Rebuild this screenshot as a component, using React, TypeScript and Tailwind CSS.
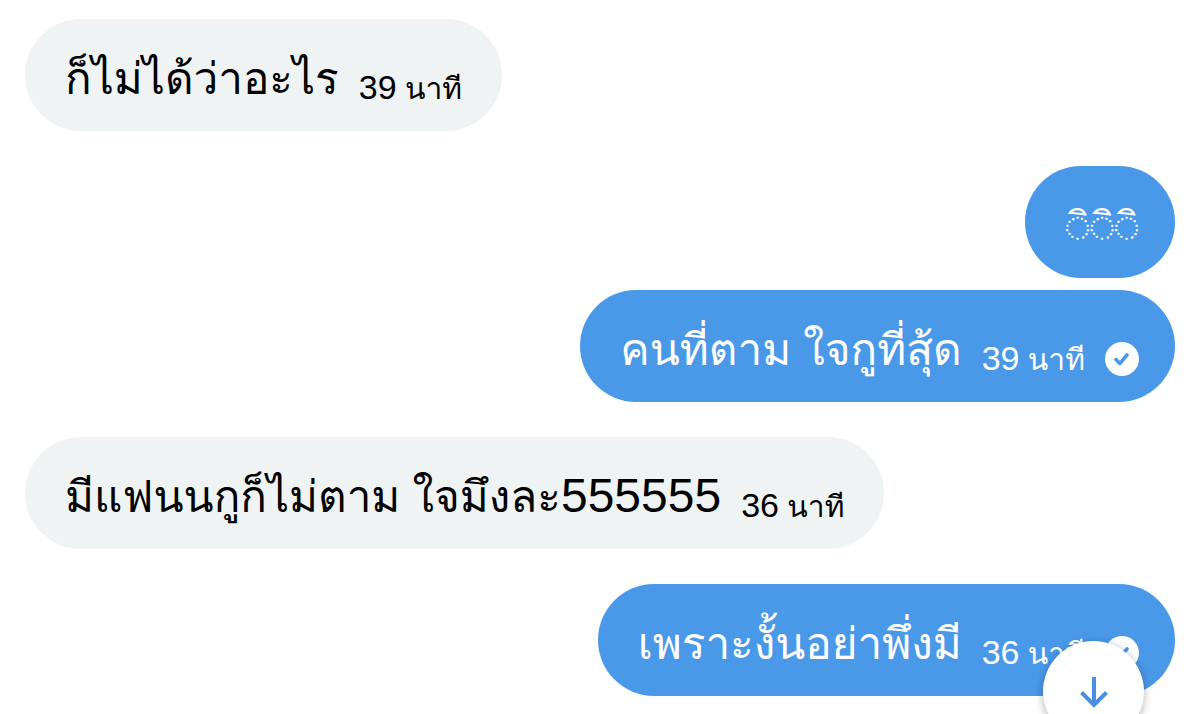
import { clsx } from 'clsx'

type Author = 'them' | 'me'

interface Message {
  id: number
  author: Author
  text: string
  digits?: string
  minutes?: number
  grouped?: boolean
}

const MESSAGES: Message[] = [
  { id: 1, author: 'them', text: 'ก็ไม่ได้ว่าอะไร', minutes: 39 },
  { id: 2, author: 'me', text: '◌ิ◌ิ◌ิ' },
  { id: 3, author: 'me', text: 'คนที่ตาม ใจกูที่สุ้ด', minutes: 39, grouped: true },
  { id: 4, author: 'them', text: 'มีแฟนนกูก็ไม่ตาม ใจมึงละ', digits: '555555', minutes: 36 },
  { id: 5, author: 'me', text: 'เพราะงั้นอย่าพึ่งมี', minutes: 36 },
]

function SentIcon() {
  return (
    <svg viewBox="0 0 34 34" className="mb-1.5 ml-5 size-[34px] shrink-0" aria-label="ส่งแล้ว">
      <circle cx="17" cy="17" r="17" fill="#fff" />
      <path
        d="M11 17.6l3.8 4 7.2-8.8"
        fill="none"
        stroke="#4a99e9"
        strokeWidth="3.6"
        strokeLinecap="round"
        strokeLinejoin="round"
      />
    </svg>
  )
}

function Bubble({ message }: { message: Message }) {
  const mine = message.author === 'me'

  return (
    <li className={clsx('flex', mine && 'justify-end', message.grouped ? 'mt-3' : 'mt-[35px] first:mt-0')}>
      <div
        className={clsx(
          'flex h-28 items-center whitespace-nowrap rounded-full pt-2 pl-10',
          mine ? 'bg-[#4a99e9] pr-9 text-white' : 'bg-[#eff3f4] pr-10 text-black'
        )}
      >
        <div className="flex items-end">
          <p className={clsx('leading-[64px]', message.minutes ? 'text-[44px]' : 'text-[40px]')}>
            {message.text}
            {message.digits && <span className="text-[48px] leading-none">{message.digits}</span>}
          </p>
          {message.minutes && (
            <time className="ml-5 text-[30px] leading-[44px]">
              <span className="text-[34px] leading-none">{message.minutes}</span> นาที
            </time>
          )}
          {mine && message.minutes && <SentIcon />}
        </div>
      </div>
    </li>
  )
}

function ScrollDownButton() {
  return (
    <button
      type="button"
      aria-label="เลื่อนลง"
      className="fixed right-14 -bottom-7 flex size-[101px] items-center justify-center rounded-full bg-white text-[#4a90e2] shadow-[0_2px_10px_rgba(0,0,0,0.3)]"
    >
      <svg viewBox="0 0 30 32" className="h-8 w-[30px]" fill="none" stroke="currentColor" strokeWidth="4">
        <path d="M15 1v27" />
        <path d="M2.5 16.5L15 29l12.5-12.5" />
      </svg>
    </button>
  )
}

export default function App() {
  return (
    <main className="h-screen overflow-hidden bg-white font-['Liberation_Sans',Loma,sans-serif]">
      <ul className="px-[25px] pt-[19px]">
        {MESSAGES.map((message) => (
          <Bubble key={message.id} message={message} />
        ))}
      </ul>
      <ScrollDownButton />
    </main>
  )
}
